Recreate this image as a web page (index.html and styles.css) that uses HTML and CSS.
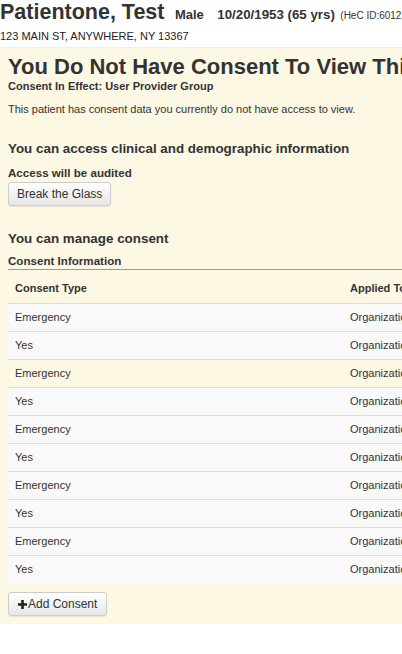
FILE: index.html
```html
<!DOCTYPE html>
<html>
<head>
<meta charset="utf-8">
<link rel="stylesheet" href="styles.css">
</head>
<body>
<div class="page">
  <header class="patient">
    <div class="name-line">
      <span class="name">Patientone, Test</span>
      <span class="gender">Male</span>
      <span class="dob">10/20/1953 (65 yrs)</span>
      <span class="hecid">(HeC ID:601224)</span>
    </div>
    <div class="address">123 MAIN ST, ANYWHERE, NY 13367</div>
  </header>
  <section class="panel">
    <h1 class="title">You Do Not Have Consent To View This Patient</h1>
    <div class="in-effect">Consent In Effect: User Provider Group</div>
    <p class="note">This patient has consent data you currently do not have access to view.</p>

    <h2 class="sub">You can access clinical and demographic information</h2>
    <div class="label">Access will be audited</div>
    <button class="btn">Break the Glass</button>

    <h2 class="sub sub-manage">You can manage consent</h2>
    <div class="label section-label">Consent Information</div>
    <table class="consent">
      <thead>
        <tr><th class="c1">Consent Type</th><th>Applied To</th></tr>
      </thead>
      <tbody>
        <tr><td>Emergency</td><td>Organization</td></tr>
        <tr><td>Yes</td><td>Organization</td></tr>
        <tr><td>Emergency</td><td>Organization</td></tr>
        <tr><td>Yes</td><td>Organization</td></tr>
        <tr><td>Emergency</td><td>Organization</td></tr>
        <tr><td>Yes</td><td>Organization</td></tr>
        <tr><td>Emergency</td><td>Organization</td></tr>
        <tr><td>Yes</td><td>Organization</td></tr>
        <tr><td>Emergency</td><td>Organization</td></tr>
        <tr><td>Yes</td><td>Organization</td></tr>
      </tbody>
    </table>
    <button class="btn btn-add"><svg class="plus" width="9" height="9" viewBox="0 0 9 9"><path d="M3.2 0h2.6v3.2H9v2.6H5.8V9H3.2V5.8H0V3.2h3.2z" fill="#222"/></svg>Add Consent</button>
  </section>
</div>
</body>
</html>
```
FILE: styles.css
```css
html, body {
  margin: 0;
  padding: 0;
  overflow: hidden;
  background: #fff;
}
body {
  font-family: "Liberation Sans", Arial, sans-serif;
  color: #333;
}
.page {
  width: 720px;
}
.patient {
  padding: 0;
  height: 47px;
}
.name-line {
  white-space: nowrap;
  line-height: 24px;
}
.name {
  font-size: 21.5px;
  font-weight: bold;
  margin-right: 6px;
}
.gender {
  font-size: 13px;
  font-weight: bold;
  margin-right: 9px;
}
.dob {
  font-size: 13.3px;
  font-weight: bold;
  margin-right: 1px;
}
.hecid {
  font-size: 10px;
}
.address {
  font-size: 11px;
  line-height: 16px;
  color: #222;
}
.panel {
  background: #fcf8e3;
  border-top: 1px solid #f7f0d4;
  padding: 7px 0 8px 8px;
}
.title {
  margin: 0;
  font-size: 22px;
  line-height: 24px;
  font-weight: bold;
  white-space: nowrap;
  color: #333;
}
.in-effect {
  font-size: 11px;
  font-weight: bold;
  line-height: 14px;
}
.note {
  font-size: 11px;
  line-height: 14px;
  margin: 9px 0 0;
}
.sub {
  font-size: 13.4px;
  font-weight: bold;
  margin: 24px 0 0;
  line-height: 18px;
}
.sub-manage {
  margin-top: 24px;
}
.label {
  font-size: 11.6px;
  font-weight: bold;
  line-height: 15px;
  margin-top: 7px;
}
.section-label {
  margin-top: 5px;
  padding-bottom: 1px;
  border-bottom: 1px solid #999;
}
.btn {
  display: block;
  font-family: "Liberation Sans", Arial, sans-serif;
  font-size: 12px;
  color: #333;
  padding: 4px 8px;
  line-height: 14px;
  margin-top: 2px;
  border: 1px solid #ccc;
  border-radius: 3px;
  background: linear-gradient(#fff, #e6e6e6);
  box-shadow: 0 1px 1px rgba(0,0,0,0.08);
}
.consent {
  width: 100%;
  border-collapse: collapse;
  margin-top: 4px;
  font-size: 11px;
}
.consent th {
  text-align: left;
  font-weight: bold;
  padding: 7px 7px;
  line-height: 15px;
  border-bottom: 1px solid #ddd;
}
.consent th.c1 {
  width: 321px;
}
.consent td {
  padding: 6px 7px;
  line-height: 15px;
  border-top: 1px solid #ddd;
}
.consent tbody tr {
  background: #f9f9f9;
}
.consent tbody tr:nth-child(3) {
  background: #fcf8e3;
}
.btn-add {
  margin-top: 9px;
  padding: 4px 9px 4px 9px;
  display: flex;
  align-items: center;
}
.plus {
  margin-right: 1px;
}
```
